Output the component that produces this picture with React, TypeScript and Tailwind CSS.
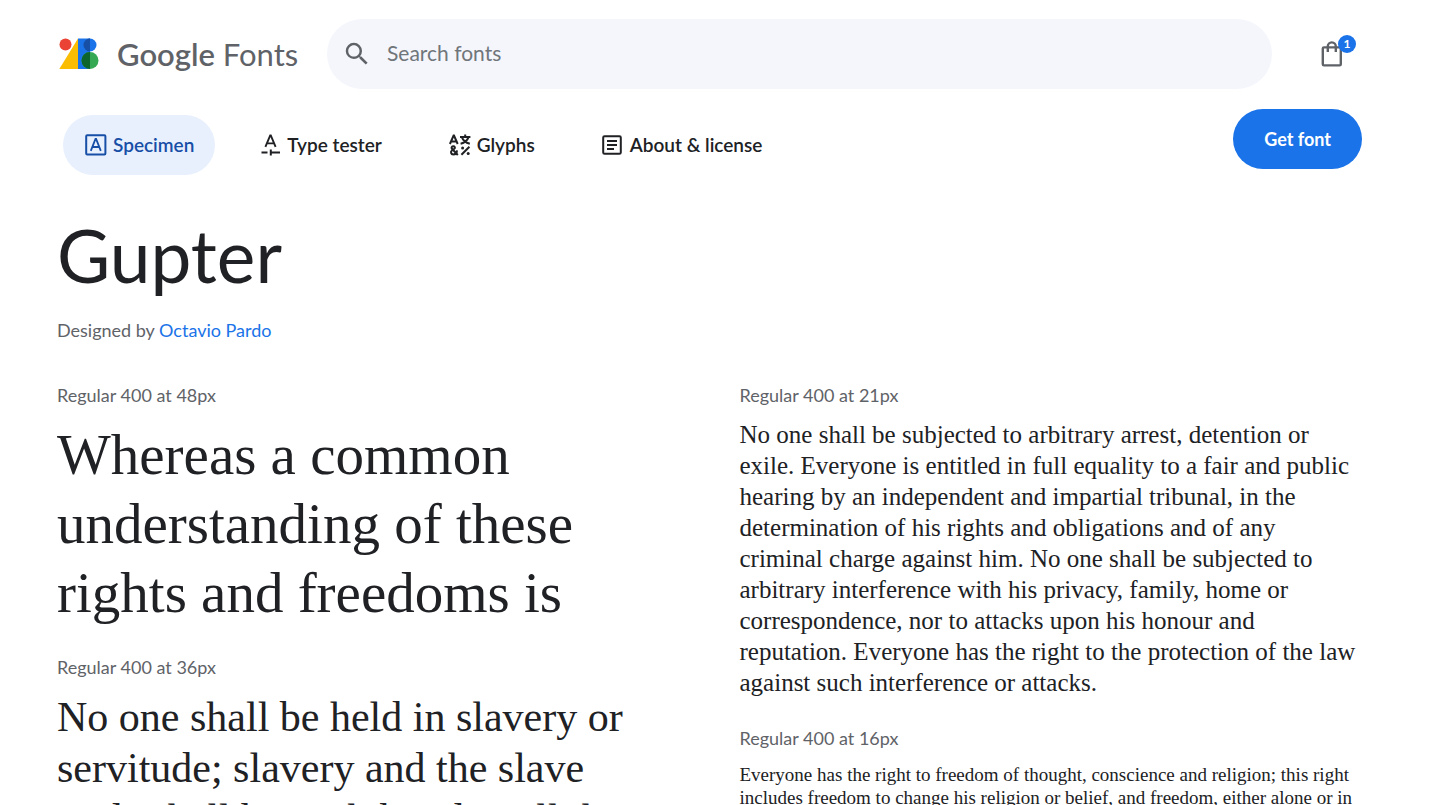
import type { ReactNode } from 'react';
import { MdSearch } from 'react-icons/md';

function LogoMark() {
  return (
    <svg viewBox="0 0 40 32" className="h-8 w-10 shrink-0" aria-hidden="true">
      <path d="M19 .5V31H0.3Z" fill="#fbbc04" />
      <path d="M19 .5h12v30.5H19Z" fill="#1a73e8" />
      <circle cx="6.5" cy="6.5" r="6" fill="#ea4335" />
      <circle cx="31" cy="7" r="6.5" fill="#1a73e8" />
      <path d="M31 .5a6.5 6.5 0 0 0 0 13Z" fill="#174ea6" />
      <circle cx="31" cy="22.5" r="8.5" fill="#34a853" />
      <path d="M31 14a8.5 8.5 0 0 0 0 17Z" fill="#0d652d" />
    </svg>
  );
}

function SpecimenIcon() {
  return (
    <svg viewBox="0 0 22 22" className="size-[22px] shrink-0" fill="none" stroke="currentColor" strokeWidth="2" aria-hidden="true">
      <rect x="1.2" y="1.2" width="19.2" height="19.2" rx="1" />
      <path d="M5.8 16.8 10.5 5h.6l4.7 11.8M7.4 13h6.8" strokeWidth="1.8" />
    </svg>
  );
}

function TesterIcon() {
  return (
    <svg viewBox="0 0 20 22" className="h-[22px] w-5 shrink-0" fill="none" stroke="currentColor" strokeWidth="1.9" aria-hidden="true">
      <path d="M4.4 12.8 9.2 1.4h.6l4.8 11.4M6.2 9.4h6.6" />
      <path d="M.5 18.6h6M9.8 15.6v6M9.8 18.6h9.2" strokeWidth="2" />
    </svg>
  );
}

function GlyphsIcon() {
  return (
    <svg viewBox="0 0 22 22" className="size-[22px] shrink-0" fill="none" stroke="currentColor" strokeWidth="2" aria-hidden="true">
      <path d="M.9 10 4.6 1.6h.4L8.7 10M2.3 7.4h5" />
      <path d="M11 3h10.4M16.2.4V3M13 3.4c1 3 3.4 5.2 7.8 6.4M19.4 3.4c-1 3-3.4 5.2-7.8 6.4" />
      <path d="m8.8 21-5.8-6.2c-1.2-1.4.1-2.5 1.3-2.5 1.4 0 2.3 1.4 1 2.5l-2.4 1.7c-1.6 1.2-1 3.9 1.3 3.9 2.4 0 3.7-1.7 3.8-4" />
      <path d="m12.4 20.8 8-8" />
      <circle cx="13.6" cy="14" r="1.5" fill="currentColor" stroke="none" />
      <circle cx="19.2" cy="19.6" r="1.5" fill="currentColor" stroke="none" />
    </svg>
  );
}

function ArticleIcon() {
  return (
    <svg viewBox="0 0 22 22" className="size-[22px] shrink-0" fill="none" stroke="currentColor" strokeWidth="2" aria-hidden="true">
      <rect x="1.2" y="2.2" width="17.6" height="17.6" rx="1.4" />
      <path d="M5 7h10M5 11h10M5 15h7" />
    </svg>
  );
}

function BagIcon() {
  return (
    <svg viewBox="0 0 22 26" className="h-[26px] w-[22px]" fill="none" stroke="currentColor" strokeWidth="2.4" aria-hidden="true">
      <rect x="1.8" y="6.4" width="18" height="18" rx="1.2" />
      <path d="M6.8 11V5.4a4 4 0 0 1 8 0V11" />
    </svg>
  );
}

function Tab({ icon, label, active = false }: { icon: ReactNode; label: string; active?: boolean }) {
  return (
    <a
      href="#"
      aria-current={active ? 'page' : undefined}
      className={
        active
          ? 'flex h-[60px] items-center gap-1.5 rounded-full bg-[#e8f0fe] pr-[21px] pl-[22px] text-[#174ea6]'
          : 'flex h-[60px] items-center gap-1.5 rounded-full pr-[21px] pl-[22px] text-[#202124]'
      }
    >
      {icon}
      <span>{label}</span>
    </a>
  );
}

function Sample({ label, lines, textClass }: { label: string; lines: string[]; textClass: string }) {
  return (
    <section>
      <h2 className="text-lg leading-6 text-[#5f6368]">{label}</h2>
      <p className={textClass}>
        {lines.map((line) => (
          <span key={line} className="block whitespace-nowrap">
            {line}
          </span>
        ))}
      </p>
    </section>
  );
}

export default function App() {
  return (
    <div className="h-screen overflow-hidden bg-white font-['Lato','Open_Sans',sans-serif] text-[#202124]">
      <header className="flex items-center pt-[19px] pr-[88px] pl-[59px]">
        <a href="#" className="flex w-[268px] shrink-0 items-center gap-[18px] text-[#5f6368]">
          <LogoMark />
          <span className="text-[31px] leading-10 whitespace-nowrap">
            <span className="font-semibold">Google</span> Fonts
          </span>
        </a>
        <label className="flex h-[70px] min-w-0 flex-1 items-center rounded-full bg-[#f4f6fc] pl-[15px]">
          <MdSearch className="size-[30px] shrink-0 text-[#5f6368]" aria-hidden="true" />
          <input
            type="text"
            aria-label="Search fonts"
            placeholder="Search fonts"
            className="mr-8 mb-1 ml-[15px] h-12 min-w-0 flex-1 bg-transparent text-[21px] outline-none placeholder:text-[#70757a]"
          />
        </label>
        <button type="button" aria-label="Selected fonts" className="relative ml-[49px] shrink-0 text-[#5f6368]">
          <BagIcon />
          <span className="absolute -top-1.5 left-[17px] flex size-[18px] items-center justify-center rounded-full bg-[#1a73e8] text-xs font-bold text-white">
            1
          </span>
        </button>
      </header>

      <div className="flex items-start justify-between pt-5 pr-[69px] pl-[63px]">
        <nav className="flex gap-6 pt-1.5 text-[19px] font-semibold">
          <Tab icon={<SpecimenIcon />} label="Specimen" active />
          <Tab icon={<TesterIcon />} label="Type tester" />
          <Tab icon={<GlyphsIcon />} label="Glyphs" />
          <Tab icon={<ArticleIcon />} label="About & license" />
        </nav>
        <button type="button" className="h-[60px] rounded-full bg-[#1a73e8] px-[31px] text-lg font-bold text-white">
          Get font
        </button>
      </div>

      <main className="px-[57px] pt-8">
        <h1 className="text-[73px] leading-[96px]">Gupter</h1>
        <p className="mt-[15px] text-lg leading-6 text-[#5f6368]">
          Designed by{' '}
          <a href="#" className="text-[#1a73e8]">
            Octavio Pardo
          </a>
        </p>

        <div className="mt-[41px] grid grid-cols-2 gap-12">
          <div className="flex flex-col gap-7">
            <Sample
              label="Regular 400 at 48px"
              textClass="mt-[13px] font-['Liberation_Serif',serif] text-[57px] leading-[69px]"
              lines={['Whereas a common', 'understanding of these', 'rights and freedoms is']}
            />
            <Sample
              label="Regular 400 at 36px"
              textClass="mt-[13px] font-['Liberation_Serif',serif] text-[42px] leading-[51px]"
              lines={['No one shall be held in slavery or', 'servitude; slavery and the slave', 'trade shall be prohibited in all their']}
            />
          </div>
          <div className="flex flex-col gap-7">
            <Sample
              label="Regular 400 at 21px"
              textClass="mt-3 font-['Liberation_Serif',serif] text-[25px] leading-[31px]"
              lines={[
                'No one shall be subjected to arbitrary arrest, detention or',
                'exile. Everyone is entitled in full equality to a fair and public',
                'hearing by an independent and impartial tribunal, in the',
                'determination of his rights and obligations and of any',
                'criminal charge against him. No one shall be subjected to',
                'arbitrary interference with his privacy, family, home or',
                'correspondence, nor to attacks upon his honour and',
                'reputation. Everyone has the right to the protection of the law',
                'against such interference or attacks.',
              ]}
            />
            <Sample
              label="Regular 400 at 16px"
              textClass="mt-[13px] font-['Liberation_Serif',serif] text-[19px] leading-[23px]"
              lines={[
                'Everyone has the right to freedom of thought, conscience and religion; this right',
                'includes freedom to change his religion or belief, and freedom, either alone or in',
              ]}
            />
          </div>
        </div>
      </main>
    </div>
  );
}
